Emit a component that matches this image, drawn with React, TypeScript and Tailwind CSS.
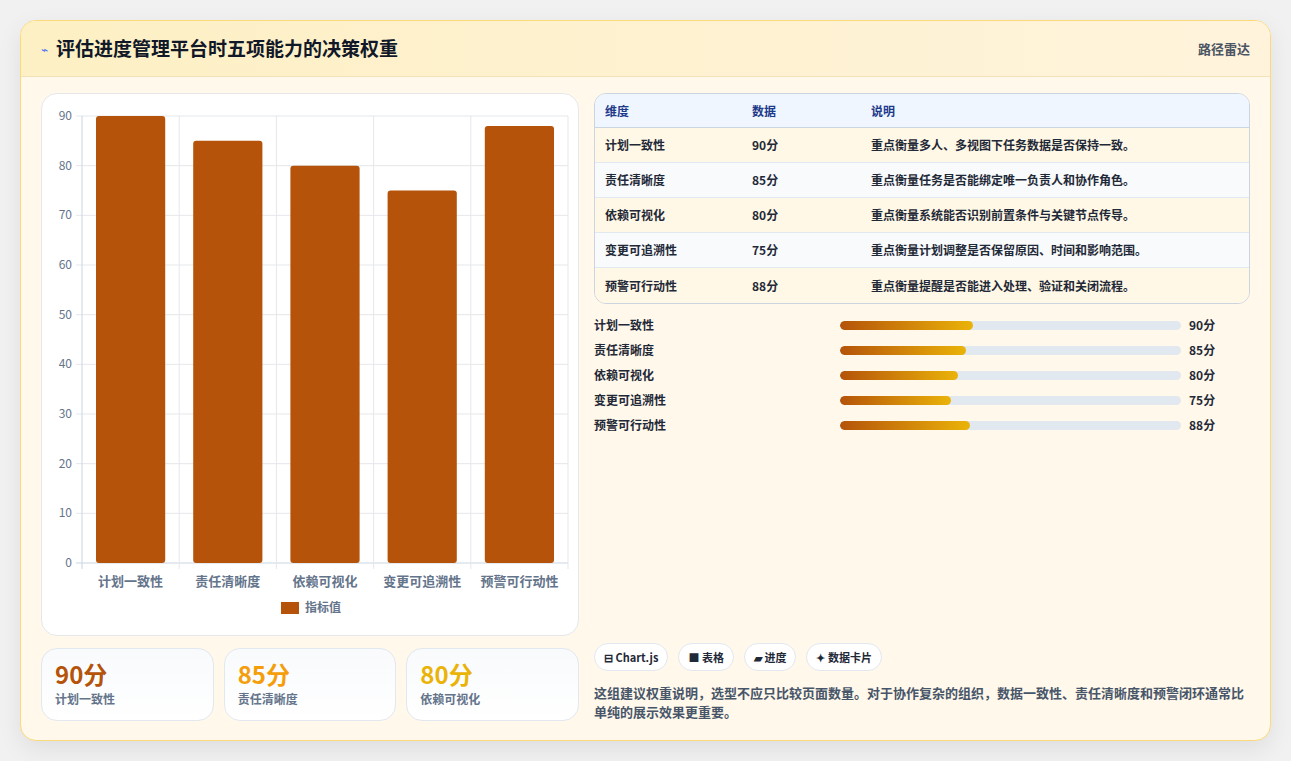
import React from "react";

const rows = [
  { n: "计划一致性", v: 90, d: "重点衡量多人、多视图下任务数据是否保持一致。" },
  { n: "责任清晰度", v: 85, d: "重点衡量任务是否能绑定唯一负责人和协作角色。" },
  { n: "依赖可视化", v: 80, d: "重点衡量系统能否识别前置条件与关键节点传导。" },
  { n: "变更可追溯性", v: 75, d: "重点衡量计划调整是否保留原因、时间和影响范围。" },
  { n: "预警可行动性", v: 88, d: "重点衡量提醒是否能进入处理、验证和关闭流程。" },
];

function Chart() {
  const x0 = 40, x1 = 526, yTop = 22, yBot = 469; // within svg coords (svg at left 40, top 93)
  const h = yBot - yTop;
  const cw = (x1 - x0) / 5;
  return (
    <svg width="538" height="543" className="block">
      {Array.from({ length: 10 }).map((_, i) => {
        const y = yBot - (i * h) / 9;
        return (
          <g key={i}>
            <line x1={x0 - 6} x2={x1} y1={y} y2={y} stroke={i === 0 ? "#cbd5e1" : "#e5e7eb"} />
            <text x={x0 - 10} y={y + 4} textAnchor="end" fontSize="12" fill="#64748b">{i * 10}</text>
          </g>
        );
      })}
      {Array.from({ length: 6 }).map((_, i) => (
        <line key={i} x1={x0 + i * cw} x2={x0 + i * cw} y1={yTop} y2={yBot + 6} stroke={i === 0 ? "#cbd5e1" : "#e5e7eb"} />
      ))}
      {rows.map((r, i) => {
        const bh = (r.v / 90) * h;
        return (
          <g key={i}>
            <rect x={x0 + i * cw + 14} y={yBot - bh} width={cw - 28} height={bh} rx="3" fill="#b45309" />
            <text x={x0 + i * cw + cw / 2} y={yBot + 23} textAnchor="middle" fontSize="13" fontWeight="600" fill="#64748b">{r.n}</text>
          </g>
        );
      })}
      <rect x="239" y="508" width="18" height="12" fill="#b45309" />
      <text x="263" y="518" fontSize="12" fontWeight="600" fill="#64748b">指标值</text>
    </svg>
  );
}

export default function App() {
  return (
    <div className="min-h-[761px] bg-[#f1f1f1] pt-5 px-5 pb-5" style={{ fontFamily: '"Noto Sans CJK SC", "Noto Sans", sans-serif' }}>
      <div className="rounded-2xl border border-[#fcd97a] bg-[#fff8eb] overflow-hidden shadow-[0_8px_24px_rgba(0,0,0,0.08)]">
        <div className="h-[56px] flex items-center justify-between px-5 bg-gradient-to-r from-[#fdf0c4] to-[#fff3dc] border-b border-[#f3e2b8]">
          <div className="flex items-center gap-2">
            <span className="text-[#4f6df5] text-xs">⌁</span>
            <span className="text-[19px] font-bold text-[#111827]">评估进度管理平台时五项能力的决策权重</span>
          </div>
          <span className="text-[13px] font-semibold text-[#4b5563]">路径雷达</span>
        </div>
        <div className="flex gap-[15px] p-5 pt-4 pb-[19px]">
          <div className="w-[538px] flex flex-col gap-3">
            <div className="h-[543px] bg-white rounded-2xl border border-[#e5e7eb]">
              <Chart />
            </div>
            <div className="grid grid-cols-3 gap-[10px]">
              {[
                ["90分", "计划一致性", "text-[#b45309]"],
                ["85分", "责任清晰度", "text-[#f59e0b]"],
                ["80分", "依赖可视化", "text-[#eab308]"],
              ].map(([a, b, c]) => (
                <div key={b} className="h-[73px] rounded-2xl border border-[#e2e8f0] bg-gradient-to-b from-[#f8fafc] to-white px-[13px] pt-[10px]">
                  <div className={`text-[24px] font-bold leading-[30px] ${c}`}>{a}</div>
                  <div className="text-xs font-semibold text-[#64748b] mt-[2px]">{b}</div>
                </div>
              ))}
            </div>
          </div>
          <div className="flex-1 flex flex-col">
            <div className="rounded-xl border border-[#cbd5e1] overflow-hidden text-xs font-semibold">
              <div className="flex h-[34px] items-center bg-[#eff6ff] text-[#1e3a8a] border-b border-[#cbd5e1]">
                <div className="w-[157px] pl-[10px]">维度</div>
                <div className="w-[119px]">数据</div>
                <div>说明</div>
              </div>
              {rows.map((r, i) => (
                <div key={r.n} className={`flex h-[35px] items-center text-[#1f2937] ${i % 2 ? "bg-[#f8fafc]" : "bg-[#fff8e6]"} ${i < 4 ? "border-b border-[#e2e8f0]" : ""}`}>
                  <div className="w-[157px] pl-[10px]">{r.n}</div>
                  <div className="w-[119px]">{r.v}分</div>
                  <div>{r.d}</div>
                </div>
              ))}
            </div>
            <div className="flex flex-col gap-[7px] mt-[12px]">
              {rows.map((r) => (
                <div key={r.n} className="flex items-center h-[18px] text-xs font-semibold text-[#1f2937]">
                  <div className="w-[246px]">{r.n}</div>
                  <div className="w-[341px] h-[9px] rounded-full bg-[#e2e8f0] overflow-hidden">
                    <div className="h-full rounded-full bg-gradient-to-r from-[#b45309] to-[#eab308]" style={{ width: `${(r.v / 90) * 39}%` }} />
                  </div>
                  <div className="ml-2">{r.v}分</div>
                </div>
              ))}
            </div>
            <div className="flex-1" />
            <div className="flex gap-[10px] text-[11px] font-semibold text-[#1f2937]">
              {["⊟ Chart.js", "■ 表格", "▰ 进度", "✦ 数据卡片"].map((t) => (
                <span key={t} className="h-[28px] px-[9px] flex items-center rounded-full border border-[#e2e8f0] bg-white">{t}</span>
              ))}
            </div>
            <p className="mt-[12px] text-[13px] leading-[19px] font-semibold text-[#475569]">
              这组建议权重说明，选型不应只比较页面数量。对于协作复杂的组织，数据一致性、责任清晰度和预警闭环通常比单纯的展示效果更重要。
            </p>
          </div>
        </div>
      </div>
    </div>
  );
}
